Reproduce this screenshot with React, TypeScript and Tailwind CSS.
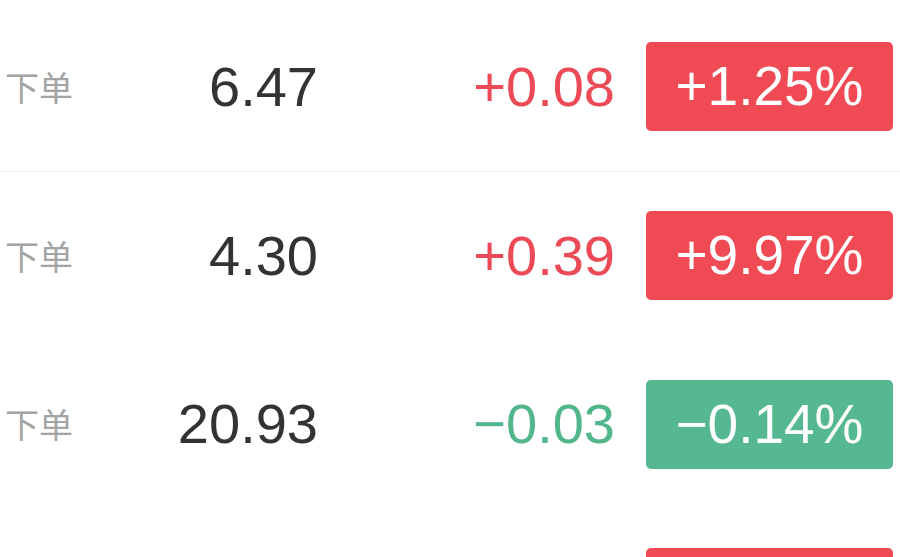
const rows = [
  { price: '6.47', change: '+0.08', pct: '+1.25%', up: true },
  { price: '4.30', change: '+0.39', pct: '+9.97%', up: true },
  { price: '20.93', change: '−0.03', pct: '−0.14%', up: false },
  { price: '7.12', change: '+0.21', pct: '+3.04%', up: true },
];

export default function App() {
  return (
    <div
      className="h-[557px] w-[900px] overflow-hidden bg-white pt-[3px]"
      style={{ fontFamily: '"Liberation Sans", Arial, "Noto Sans CJK SC", sans-serif' }}
    >
      {rows.map((r, i) => (
        <div
          key={i}
          className={`flex h-[168.5px] items-center ${i === 0 ? 'border-b border-[#f2f2f2]' : ''}`}
        >
          <div
            className="w-[160px] pl-[5px] text-[34px] leading-none text-[#a3a3a3]"
            style={{ fontFamily: '"Noto Sans CJK SC", sans-serif' }}
          >
            下单
          </div>
          <div className="w-[158px] text-right text-[56px] leading-none text-[#333333]">
            {r.price}
          </div>
          <div
            className={`w-[297px] text-right text-[56px] leading-none ${
              r.up ? 'text-[#ec4a56]' : 'text-[#52b68d]'
            }`}
          >
            {r.change}
          </div>
          <div
            className={`ml-[31px] flex h-[89px] w-[247px] items-center justify-center rounded-[5px] text-[55px] leading-none text-white ${
              r.up ? 'bg-[#f04a55]' : 'bg-[#55b890]'
            }`}
          >
            {r.pct}
          </div>
        </div>
      ))}
    </div>
  );
}
